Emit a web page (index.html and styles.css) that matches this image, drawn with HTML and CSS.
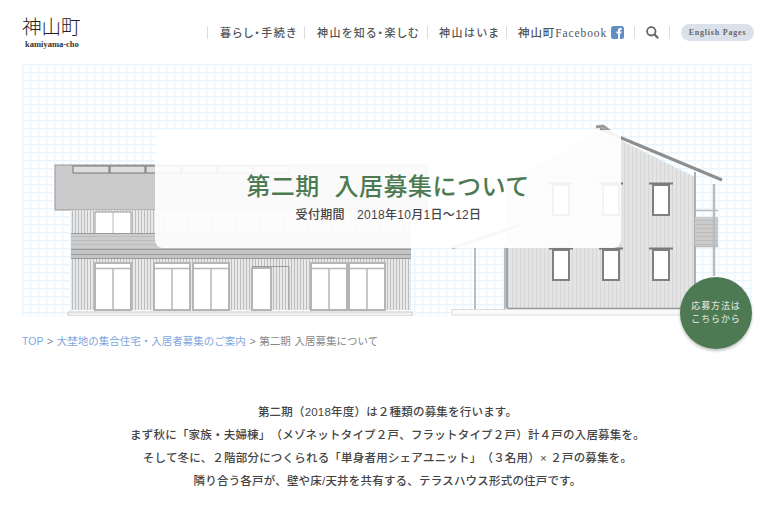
FILE: index.html
```html
<!DOCTYPE html>
<html lang="ja">
<head>
    <meta charset="UTF-8">
    <meta name="viewport" content="width=device-width, initial-scale=1.0">
    <title>第二期 入居募集について</title>
    <link rel="stylesheet" href="styles.css">
</head>
<body>
    <header class="siteHeader">
      <a class="logo" href="#">
        <span class="logoName">神山町</span>
        <span class="logoRoman">kamiyama-cho</span>
      </a>
      <nav class="globalNav">
        <a class="navItem navKurashi" href="#">暮らし・手続き</a>
        <a class="navItem navShiru" href="#">神山を知る・楽しむ</a>
        <a class="navItem navIma" href="#">神山はいま</a>
        <a class="navItem navFb" href="#">神山町Facebook
          <svg class="fbIcon" viewBox="0 0 13 13" width="13" height="13">
            <rect width="13" height="13" rx="2.5" fill="#5f8fc4"/>
            <path d="M7 13V7.6H5.4V5.6H7V4.3C7 2.8 7.9 2 9.2 2H10.600V3.900H9.700C9.100 3.900 8.900 4.200 8.900 4.700V5.600H10.500L10.200 7.600H8.900V13Z" fill="#fff"/>
          </svg>
        </a>
        <a class="navItem navSearch" href="#">
          <svg viewBox="0 0 13 13" width="13" height="13">
            <circle cx="5.300" cy="5.300" r="4.200" fill="none" stroke="#666" stroke-width="1.800"/>
            <path d="M8.300 8.300L12.200 12.200" stroke="#666" stroke-width="2.200"/>
          </svg>
        </a>
        <span class="navItem navEnd"></span>
        <a class="englishPill" href="#">English Pages</a>
      </nav>
    </header>

    <section class="hero">
      <svg class="heroArt" viewBox="22 64 731 252" width="731" height="252">
        <defs>
          <pattern id="siding" width="3" height="3" patternUnits="userSpaceOnUse">
            <rect width="3" height="3" fill="#e9e9e9"/>
            <rect width="1" height="3" fill="#bdbdbd"/>
          </pattern>
          <pattern id="sidingFine" width="4" height="4" patternUnits="userSpaceOnUse">
            <rect width="4" height="4" fill="#e4e4e4"/>
            <rect width="1" height="4" fill="#d6d6d6"/>
          </pattern>
          <pattern id="rail" width="4" height="4" patternUnits="userSpaceOnUse">
            <rect width="4" height="4" fill="#cccccc"/>
            <rect width="4" height="1" fill="#bcbcbc"/>
          </pattern>
        </defs>

        <!-- left building -->
        <rect x="55" y="165" width="372" height="45" fill="#cbcbcb" stroke="#999"/>
        <g class="skylights" fill="#ddd" stroke="#777">
          <rect x="73" y="166" width="36" height="7"/>
          <rect x="110" y="166" width="35" height="7"/>
          <rect x="146" y="166" width="35" height="7"/>
          <rect x="182" y="166" width="35" height="7"/>
          <rect x="218" y="166" width="35" height="7"/>
          <rect x="254" y="166" width="35" height="7"/>
        </g>
        <rect x="71" y="210" width="340" height="100" fill="url(#siding)"/>
        <rect x="95" y="212" width="36" height="22" fill="#fff" stroke="#999"/>
        <path d="M113 212V234" stroke="#bbb"/>
        <rect x="71" y="234" width="340" height="15" fill="url(#rail)"/>
        <rect x="71" y="249" width="340" height="9" fill="#c4c4c4"/>
        <path d="M71 233.500H411M71 249.500H411M71 254.500H411M71 258.500H411" stroke="#999"/>
        <g class="windows" fill="#fff" stroke="#b5b5b5" stroke-width="2">
          <rect x="95" y="263" width="36" height="47"/>
          <rect x="154" y="263" width="36" height="47"/>
          <rect x="193" y="263" width="36" height="47"/>
          <rect x="311" y="263" width="36" height="47"/>
          <rect x="349" y="263" width="36" height="47"/>
          <rect x="252" y="268" width="19" height="42"/>
        </g>
        <path d="M95 268.500H131M154 268.500H190M193 268.500H229M311 268.500H347M349 268.500H385M113 268V310M172 268V310M211 268V310M329 268V310M367 268V310" stroke="#b5b5b5" stroke-width="1.500"/>
        <path d="M252 266.500H289V310" fill="none" stroke="#999"/>
        <rect x="68" y="312" width="344" height="4" fill="#f1f1f1" stroke="#ccc"/>

        <!-- right building -->
        <path d="M507 182L600 130L695 177V308H507Z" fill="url(#sidingFine)"/>
        <path d="M507 308.500H695" stroke="#999" stroke-width="1.500"/>
        <path d="M507 248V308" stroke="#888" stroke-width="1.500"/>
        <path d="M695 172V310" stroke="#999" stroke-width="1.500"/>
        <path d="M452 248L520 225" stroke="#bbb" stroke-width="3"/>
        <path d="M475 246V309M505 246V309" stroke="#bbb" stroke-width="2"/>
        <path d="M452 246H505" stroke="#ddd"/>
        <path d="M600 129L722 180" stroke="#8e8e8e" stroke-width="3"/>
        <path d="M596 127L603 126L612 133" fill="none" stroke="#999" stroke-width="3"/>
        <rect x="452" y="309.500" width="230" height="5.500" fill="#fafafa" stroke="#ddd"/>
        <rect x="695" y="217" width="23" height="29" fill="url(#rail)"/>
        <path d="M695 210.500H718M695 246.500H718" stroke="#bbb" stroke-width="1.500"/>
        <path d="M714 184V276" stroke="#bbb" stroke-width="2.500"/>
        <g class="roomWindows">
          <rect x="553" y="185" width="16" height="30"/>
          <rect x="603" y="185" width="16" height="30"/>
          <rect x="653" y="185" width="16" height="30"/>
          <rect x="553" y="250" width="16" height="30"/>
          <rect x="603" y="250" width="16" height="30"/>
          <rect x="653" y="250" width="16" height="30"/>
        </g>
        <path d="M549 183.500H573M599 183.500H623M649 183.500H673M549 248.500H573M599 248.500H623M649 248.500H673" stroke="#7a7a7a" stroke-width="2"/>
      </svg>

      <div class="heroPanel">
        <h1 class="heroTitle">第二期 入居募集について</h1>
        <p class="heroDate">受付期間　2018年10月1日～12日</p>
      </div>

      <a class="applyBadge" href="#">応募方法は<br>こちらから</a>
    </section>

    <p class="breadcrumb"><a href="#">TOP</a> &gt; <a href="#">大埜地の集合住宅・入居者募集のご案内</a> &gt; 第二期 入居募集について</p>

    <main class="intro">
      <p>第二期（2018年度）は２種類の募集を行います。</p>
      <p>まず秋に「家族・夫婦棟」（メゾネットタイプ２戸、フラットタイプ２戸）計４戸の入居募集を。</p>
      <p>そして冬に、２階部分につくられる「単身者用シェアユニット」（３名用）× ２戸の募集を。</p>
      <p>隣り合う各戸が、壁や床/天井を共有する、テラスハウス形式の住戸です。</p>
    </main>
</body>
</html>
```

FILE: styles.css
```css
* {
    box-sizing: border-box;
}
body {
    margin: 0;
    background-color: #fff;
    color: #444;
    font-family: "Liberation Sans", "Noto Sans CJK JP", sans-serif;
    text-spacing-trim: space-all;
    overflow: hidden;
}
a {
    color: inherit;
    text-decoration: none;
}
.siteHeader {
    display: flex;
    justify-content: space-between;
    height: 64px;
    padding: 15px 14px 0 22px;
}
.logo {
    display: flex;
    flex-direction: column;
    width: 70px;
}
.logoName {
    color: #222;
    font-family: "Noto Sans CJK JP", sans-serif;
    font-size: 19.500px;
    font-weight: 300;
    line-height: 21px;
}
.logoRoman {
    margin-top: 4px;
    margin-left: 3px;
    color: #333;
    font-family: "Liberation Serif", serif;
    font-size: 8.500px;
    font-weight: bold;
    line-height: 9px;
}
.globalNav {
    display: flex;
    align-items: center;
    height: 34px;
    color: #555;
    font-family: "Liberation Serif", "Noto Sans CJK JP", serif;
    font-size: 11px;
    font-weight: 500;
    font-feature-settings: "palt";
    letter-spacing: 1.500px;
}
.navItem {
    display: flex;
    align-items: center;
    height: 13px;
    border-left: 1px solid #ddd;
    white-space: nowrap;
}
.navKurashi {
    width: 97px;
    padding-left: 12px;
}
.navShiru {
    width: 123px;
    padding-left: 12px;
}
.navIma {
    width: 79px;
    padding-left: 11px;
}
.navFb {
    gap: 4px;
    width: 128px;
    padding-left: 11px;
    font-size: 11.500px;
    letter-spacing: 0.900px;
}
.fbIcon {
    flex: none;
}
.navSearch {
    width: 35px;
    padding-left: 11px;
}
.navEnd {
    width: 12px;
}
.englishPill {
    display: flex;
    align-items: center;
    justify-content: center;
    width: 73px;
    height: 17px;
    border-radius: 9px;
    background-color: #dbe1ea;
    color: #666;
    font-size: 8px;
    font-weight: bold;
    letter-spacing: 0.800px;
}
.hero {
    position: relative;
    width: 731px;
    height: 252px;
    margin-left: 22px;
    background-color: #fff;
    background-image:
        linear-gradient(#e8f5fe 1px, #f5fbff 1px, #f5fbff 2px, transparent 2px),
        linear-gradient(90deg, #e8f5fe 1px, #f5fbff 1px, #f5fbff 2px, transparent 2px);
    background-size: 8px 8px;
}
.heroArt {
    display: block;
}
.roomWindows rect {
    fill: #fff;
    stroke: #808080;
    stroke-width: 2;
}
.heroPanel {
    position: absolute;
    top: 66px;
    left: 133px;
    display: flex;
    flex-direction: column;
    align-items: center;
    width: 466px;
    height: 118px;
    padding-top: 41px;
    border-radius: 0 0 8px 8px;
    background-color: rgba(255, 255, 255, 0.9);
}
.heroTitle {
    margin: -1px 0 0;
    color: #4d7a52;
    font-family: "Noto Sans CJK JP", sans-serif;
    font-size: 24px;
    font-weight: 500;
    line-height: 30px;
    letter-spacing: 0.500px;
    word-spacing: 9px;
    white-space: nowrap;
}
.heroDate {
    margin: 6px 0 0 1px;
    color: #444;
    font-size: 12px;
    font-weight: 500;
    line-height: 18px;
    letter-spacing: 0.300px;
}
.applyBadge {
    position: absolute;
    top: 213px;
    left: 658px;
    display: flex;
    align-items: center;
    justify-content: center;
    width: 72px;
    height: 72px;
    border-radius: 50%;
    background-color: #4d7a52;
    box-shadow: 0 2px 3px rgba(0, 0, 0, 0.25);
    color: #d5dfd5;
    font-size: 9px;
    font-weight: 500;
    line-height: 13px;
    letter-spacing: 0.900px;
    text-align: center;
}
.breadcrumb {
    margin: 17px 0 0 22px;
    color: #888;
    font-size: 10.500px;
    line-height: 16px;
    word-spacing: 0.800px;
}
.breadcrumb a {
    color: #7fa6dc;
}
.intro {
    margin-top: 52px;
    padding-left: 7px;
    color: #444;
    font-size: 11.500px;
    font-weight: 500;
    letter-spacing: 0.200px;
    text-align: center;
}
.intro p {
    margin: 0;
    line-height: 23px;
}
```
